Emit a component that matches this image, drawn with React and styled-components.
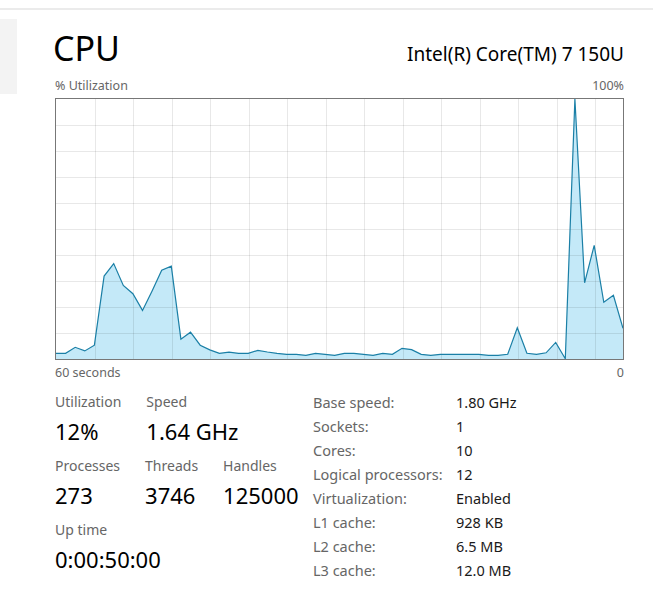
import React from 'react';
import styled, { createGlobalStyle } from 'styled-components';

const GlobalStyle = createGlobalStyle`
  html, body {
    margin: 0;
    padding: 0;
    background: #ffffff;
  }
  body {
    font-family: "Segoe UI", "Noto Sans", "Open Sans", sans-serif;
    color: #1a1a1a;
  }
`;

// cpu usage samples, one per second, oldest first
const samples = [
  2.2, 2.2, 4.5, 3.1, 5.3, 31.9, 36.7, 28.3, 25.1, 18.7,
  26.2, 34.1, 35.7, 7.6, 10.3, 5.3, 3.5, 2.2, 2.6, 2.2,
  2.2, 3.3, 2.7, 2.2, 1.8, 1.8, 1.4, 2.2, 1.8, 1.4,
  2.2, 2.2, 1.8, 1.4, 2.2, 1.8, 4.1, 3.6, 1.8, 1.4,
  1.8, 1.8, 1.8, 1.8, 1.8, 1.4, 1.4, 1.8, 12.0, 2.2,
  1.8, 2.4, 6.4, 0.1, 100, 29.3, 43.7, 21.8, 24.5, 11.8,
];

const GRAPH_W = 567;
const GRAPH_H = 260;

const stats = [
  [
    { label: 'Utilization', value: '12%' },
    { label: 'Speed', value: '1.64 GHz' },
  ],
  [
    { label: 'Processes', value: '273' },
    { label: 'Threads', value: '3746' },
    { label: 'Handles', value: '125000' },
  ],
  [
    { label: 'Up time', value: '0:00:50:00' },
  ],
];

const specs = [
  ['Base speed:', '1.80 GHz'],
  ['Sockets:', '1'],
  ['Cores:', '10'],
  ['Logical processors:', '12'],
  ['Virtualization:', 'Enabled'],
  ['L1 cache:', '928 KB'],
  ['L2 cache:', '6.5 MB'],
  ['L3 cache:', '12.0 MB'],
];

export const Page = styled.div`
  display: flex;
  flex-direction: column;
  width: 653px;
  height: 607px;
  overflow: hidden;
`;

export const TopStrip = styled.div`
  height: 8px;
  border-bottom: 2px solid #ebebeb;
`;

export const Body = styled.div`
  display: flex;
`;

export const Side = styled.div`
  width: 17px;
  flex: 0 0 17px;
`;

export const SideTab = styled.div`
  margin-top: 9px;
  height: 75px;
  background: #f3f3f3;
`;

export const Main = styled.div`
  padding-left: 38px;
  width: 569px;
`;

export const Header = styled.div`
  display: flex;
  justify-content: space-between;
  align-items: baseline;
  margin-top: 16px;
`;

export const Title = styled.div`
  font-size: 34px;
  line-height: 44px;
  margin-left: -2px;
  color: #000;
`;

export const Model = styled.div`
  font-size: 19px;
  line-height: 24px;
  color: #000;
`;

export const AxisRow = styled.div`
  display: flex;
  justify-content: space-between;
  font-size: 12.5px;
  line-height: 16px;
  color: #666;
  margin-top: ${p => p.$top || 0}px;
`;

export const GraphBox = styled.div`
  border: 1px solid #777;
  width: ${GRAPH_W}px;
  height: ${GRAPH_H}px;
  margin-top: 4px;
`;

export const Details = styled.div`
  display: flex;
  margin-top: 9px;
`;

export const StatsColumn = styled.div`
  flex: 0 0 258px;
  padding-top: 3px;
`;

export const StatRow = styled.div`
  display: flex;
  gap: 25px;
  margin-bottom: 12px;
`;

export const Stat = styled.div`
  display: flex;
  flex-direction: column;
`;

export const StatLabel = styled.div`
  font-size: 14px;
  line-height: 18px;
  color: #666;
`;

export const StatValue = styled.div`
  font-size: 22px;
  line-height: 28px;
  margin-top: 6px;
  color: #000;
`;

export const SpecTable = styled.div`
  display: grid;
  grid-template-columns: 143px auto;
  grid-auto-rows: 24px;
  font-size: 14.5px;
  line-height: 24px;
`;

export const SpecLabel = styled.div`
  color: #666;
`;

export const SpecValue = styled.div`
  color: #1a1a1a;
`;

function UsageGraph() {
  const step = GRAPH_W / (samples.length - 1);
  const pts = samples.map((v, i) => [i * step, GRAPH_H - (v / 100) * GRAPH_H]);
  const line = pts.map(([x, y]) => `${x.toFixed(1)},${y.toFixed(1)}`).join(' ');
  const area = `0,${GRAPH_H} ${line} ${GRAPH_W},${GRAPH_H}`;

  const vLines = [];
  for (let x = 38.6; x < GRAPH_W; x += 38.5) vLines.push(x);
  const hLines = [];
  for (let y = 26; y < GRAPH_H; y += 26) hLines.push(y);

  return (
    <svg width={GRAPH_W} height={GRAPH_H} viewBox={`0 0 ${GRAPH_W} ${GRAPH_H}`} style={{ display: 'block' }}>
      <polygon points={area} fill="#c4e9f8" />
      {vLines.map(x => (
        <line key={'v' + x} x1={Math.round(x) + 0.5} x2={Math.round(x) + 0.5} y1={0} y2={GRAPH_H} stroke="rgba(0,0,0,0.09)" strokeWidth="1" />
      ))}
      {hLines.map(y => (
        <line key={'h' + y} x1={0} x2={GRAPH_W} y1={y + 0.5} y2={y + 0.5} stroke="rgba(0,0,0,0.09)" strokeWidth="1" />
      ))}
      <polyline points={line} fill="none" stroke="#1a7fa6" strokeWidth="1.2" strokeLinejoin="miter" />
    </svg>
  );
}

export default function App() {
  return (
    <Page>
      <GlobalStyle />
      <TopStrip />
      <Body>
        <Side>
          <SideTab />
        </Side>
        <Main>
          <Header>
            <Title>CPU</Title>
            <Model>Intel(R) Core(TM) 7 150U</Model>
          </Header>
          <AxisRow $top={8}>
            <span>% Utilization</span>
            <span>100%</span>
          </AxisRow>
          <GraphBox>
            <UsageGraph />
          </GraphBox>
          <AxisRow $top={5}>
            <span>60 seconds</span>
            <span>0</span>
          </AxisRow>
          <Details>
            <StatsColumn>
              {stats.map((row, i) => (
                <StatRow key={i}>
                  {row.map(s => (
                    <Stat key={s.label}>
                      <StatLabel>{s.label}</StatLabel>
                      <StatValue>{s.value}</StatValue>
                    </Stat>
                  ))}
                </StatRow>
              ))}
            </StatsColumn>
            <SpecTable>
              {specs.map(([k, v]) => (
                <React.Fragment key={k}>
                  <SpecLabel>{k}</SpecLabel>
                  <SpecValue>{v}</SpecValue>
                </React.Fragment>
              ))}
            </SpecTable>
          </Details>
        </Main>
      </Body>
    </Page>
  );
}
